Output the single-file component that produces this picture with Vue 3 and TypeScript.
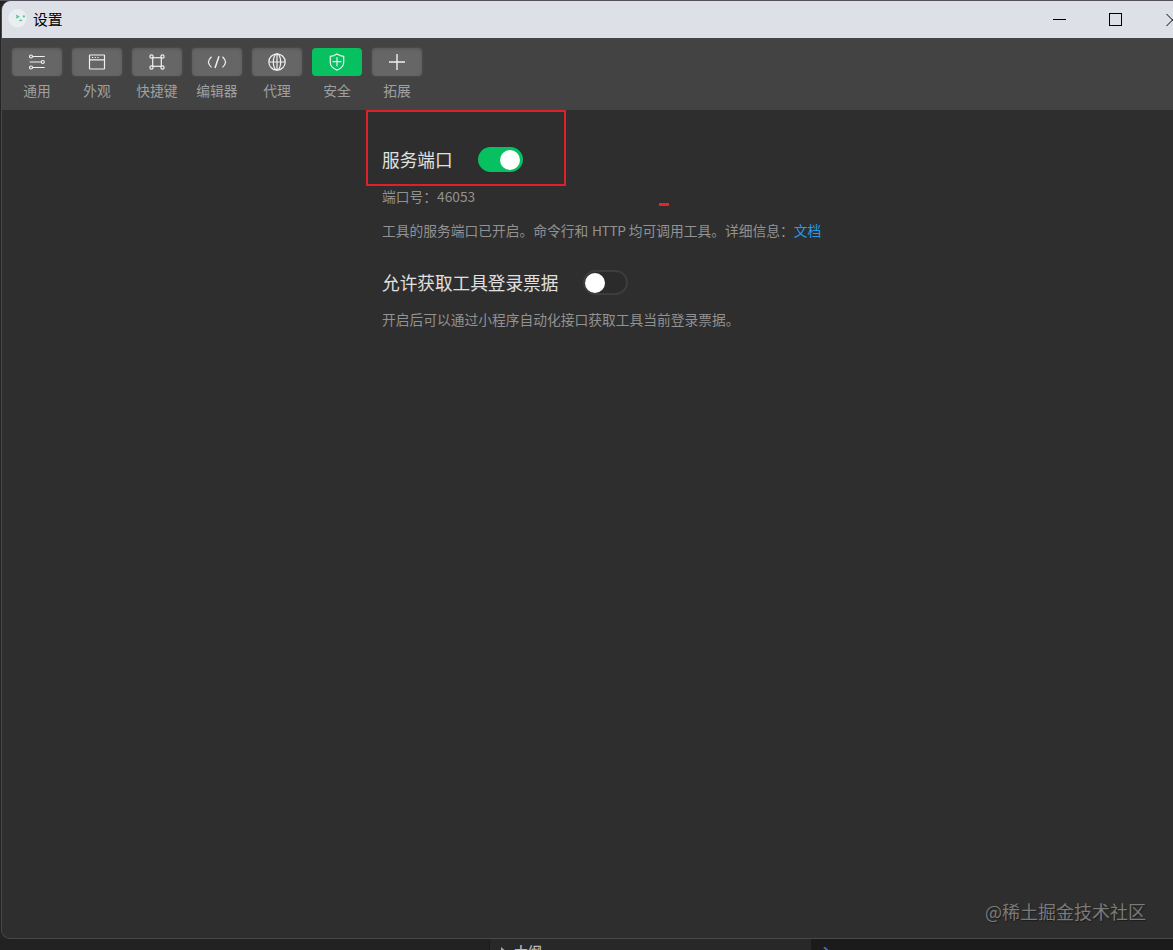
<script setup lang="ts">
import { ref } from 'vue'

type IconName = 'general' | 'appearance' | 'shortcut' | 'editor' | 'proxy' | 'security' | 'extension'

interface Tab {
  icon: IconName
  label: string
}

const tabs: Tab[] = [
  { icon: 'general', label: '通用' },
  { icon: 'appearance', label: '外观' },
  { icon: 'shortcut', label: '快捷键' },
  { icon: 'editor', label: '编辑器' },
  { icon: 'proxy', label: '代理' },
  { icon: 'security', label: '安全' },
  { icon: 'extension', label: '拓展' },
]

const active = ref<IconName>('security')
const portEnabled = ref(true)
const ticketEnabled = ref(false)
const port = 46053
</script>

<template>
  <div class="desktop">
    <div class="window">
      <header class="titlebar">
        <svg class="app-logo" width="20" height="20" viewBox="0 0 20 20">
          <circle cx="9.5" cy="10.3" r="9.2" fill="#e9eef0" />
          <path d="M8.2 7.4l2.3 1.3-2.3 1.2" fill="none" stroke="#4fc59a" stroke-width="1.3" />
          <circle cx="15.9" cy="8.4" r="1.1" fill="#4fc59a" />
          <path d="M11.4 12q1.3 1 2.6 0" fill="none" stroke="#4fc59a" stroke-width="1.3" />
        </svg>
        <span class="title">设置</span>
        <div class="controls">
          <svg width="14" height="14" viewBox="0 0 14 14"><path d="M1 6.5h13" /></svg>
          <svg width="14" height="14" viewBox="0 0 14 14"><rect x="1.5" y="0.5" width="12" height="12" /></svg>
          <svg width="14" height="14" viewBox="0 0 14 14"><path d="M2.5 1l12 12M14.5 1l-12 12" /></svg>
        </div>
      </header>

      <nav class="toolbar">
        <div
          v-for="tab in tabs"
          :key="tab.icon"
          class="tab"
          :class="{ active: tab.icon === active }"
          @click="active = tab.icon"
        >
          <button class="tab-button" type="button">
            <svg width="20" height="20" viewBox="0 0 20 20">
              <template v-if="tab.icon === 'general'">
                <circle cx="4" cy="4.5" r="1.5" />
                <circle cx="15.8" cy="10" r="1.5" />
                <circle cx="4" cy="15.5" r="1.5" />
                <path d="M5.5 4.5h12.2M2.7 10h11.6M5.5 15.5h12.2" />
              </template>
              <template v-else-if="tab.icon === 'appearance'">
                <rect x="2.5" y="3" width="15" height="14" rx="0.5" />
                <path d="M2.5 7.8h15" />
                <path d="M5 5.5h1.2M7.7 5.5h1.2M10.4 5.5h1.2" />
              </template>
              <template v-else-if="tab.icon === 'shortcut'">
                <rect x="5.7" y="5.7" width="8.6" height="8.6" />
                <circle cx="4.5" cy="4.5" r="1.6" />
                <circle cx="15.5" cy="4.5" r="1.6" />
                <circle cx="4.5" cy="15.5" r="1.6" />
                <circle cx="15.5" cy="15.5" r="1.6" />
              </template>
              <template v-else-if="tab.icon === 'editor'">
                <path d="M4.5 4.8Q1.9 7.3 1.4 10.1q.5 2.9 3.1 5.3M15.5 4.8q2.6 2.5 3.1 5.3-.5 2.9-3.1 5.3" />
                <path class="slash" d="M12 4.3L8 15.9" />
              </template>
              <template v-else-if="tab.icon === 'proxy'">
                <circle cx="10" cy="10" r="8.2" />
                <ellipse cx="10" cy="10" rx="3.7" ry="8.2" />
                <path d="M1.8 10h16.4M10 1.8v16.4" />
              </template>
              <template v-else-if="tab.icon === 'security'">
                <path d="M10 2Q6.8 4.2 3.3 4.3v6.2c0 3.7 3 6.1 6.7 7.6 3.7-1.5 6.7-3.9 6.7-7.6V4.3Q13.2 4.2 10 2z" />
                <path d="M5.5 9.7h9M10 5.2v9" />
              </template>
              <template v-else>
                <path class="plus" d="M2 10h16M10 2v16" />
              </template>
            </svg>
          </button>
          <span class="tab-label">{{ tab.label }}</span>
        </div>
      </nav>

      <main class="content">
        <section class="setting">
          <div class="setting-head">
            <h2>服务端口</h2>
            <button
              class="switch"
              :class="{ on: portEnabled }"
              type="button"
              @click="portEnabled = !portEnabled"
            ></button>
          </div>
          <p class="port">端口号：{{ port }}</p>
          <p class="detail">
            工具的服务端口已开启。命令行和 <span class="latin">HTTP</span> 均可调用工具。详细信息：<a>文档</a>
          </p>
        </section>
        <section class="setting second">
          <div class="setting-head">
            <h2>允许获取工具登录票据</h2>
            <button
              class="switch"
              :class="{ on: ticketEnabled }"
              type="button"
              @click="ticketEnabled = !ticketEnabled"
            ></button>
          </div>
          <p class="ticket">开启后可以通过小程序自动化接口获取工具当前登录票据。</p>
        </section>
      </main>
    </div>

    <footer class="behind">
      <div class="behind-left"></div>
      <div class="behind-outline">
        <svg width="8" height="10" viewBox="0 0 8 10"><path d="M1 0l6 5-6 5z" fill="#aaa" /></svg>
        <span>大纲</span>
      </div>
      <div class="behind-right">
        <svg width="6" height="8" viewBox="0 0 6 8"><path d="M1 0l4 4-4 4" fill="none" stroke="#4467b5" stroke-width="2" /></svg>
      </div>
    </footer>

    <div class="highlight"></div>
    <div class="red-mark"></div>
    <div class="watermark">@稀土掘金技术社区</div>
  </div>
</template>

<style>
body {
  background: #212121;
}
</style>

<style scoped>
.desktop {
  position: relative;
  width: 100%;
  height: 950px;
  overflow: hidden;
  display: flex;
  flex-direction: column;
  background: #242424;
  border-top: 1px solid #53505c;
  box-sizing: border-box;
  font-family: 'Noto Sans CJK SC', sans-serif;
}

.window {
  flex: none;
  height: 938px;
  width: 1190px;
  margin-left: 1px;
  box-sizing: border-box;
  border: 1px solid #484848;
  border-top: 0;
  border-radius: 9px;
  overflow: hidden;
  background: #2e2e2e;
}

.titlebar {
  display: flex;
  align-items: center;
  height: 37px;
  padding-left: 6px;
  background: #dee0e8;
  color: #000;
}

.app-logo {
  margin-top: -3px;
}

.title {
  margin: -2px 0 0 5px;
  font-size: 14.8px;
  line-height: 20px;
}

.controls {
  display: flex;
  gap: 42px;
  margin-left: auto;
  margin-right: 12px;
}

.controls svg {
  fill: none;
  stroke: #000;
  stroke-width: 1;
  overflow: visible;
}

.toolbar {
  display: flex;
  height: 72px;
  box-sizing: border-box;
  padding: 10px 0 0 5px;
  background: #424342;
}

.tab {
  display: flex;
  flex-direction: column;
  align-items: center;
  width: 60px;
}

.tab-button {
  display: flex;
  align-items: center;
  justify-content: center;
  width: 50px;
  height: 28px;
  padding: 0;
  border: 0;
  border-radius: 4px;
  background: #666;
  box-shadow: 0 0 3px #555, inset 0 1px 3px #555;
}

.tab-button svg {
  fill: none;
  stroke: #f0f0f0;
  stroke-width: 1.2;
}

.tab-button .slash {
  stroke-width: 1.5;
}

.tab-button .plus {
  stroke-width: 1.4;
}

.active .tab-button {
  background: #07c160;
  box-shadow: none;
}

.tab-label {
  margin-top: 4px;
  color: #a0a0a0;
  font-size: 13.75px;
  line-height: 20px;
  white-space: nowrap;
}

.content {
  padding: 36px 0 0 380px;
}

.setting-head {
  display: flex;
  align-items: center;
  height: 27px;
  gap: 25.4px;
}

h2 {
  margin: 0;
  color: #e0e0e0;
  font-size: 17.65px;
  font-weight: 400;
  line-height: 27px;
}

p {
  margin: 0;
  color: #929292;
  font-size: 13.76px;
  line-height: 20px;
  white-space: nowrap;
}

.port {
  margin-top: 13px;
}

.detail {
  margin-top: 14px;
}

.latin {
  margin-left: 0.6px;
  letter-spacing: -0.35px;
}

a {
  color: #259cea;
}

.second {
  margin-top: 29px;
}

.ticket {
  margin-top: 13px;
}

.switch {
  width: 45px;
  height: 25px;
  padding: 0 1px;
  border: 2px solid #3d3d3d;
  border-radius: 13px;
  background: #2b2b2b;
  box-sizing: border-box;
  display: flex;
  align-items: center;
}

.second .switch {
  margin-left: -1px;
}

.switch::before {
  content: '';
  width: 20px;
  height: 20px;
  margin-left: -1px;
  border-radius: 50%;
  background: #fff;
}

.switch.on {
  justify-content: flex-end;
  border-color: #07c160;
  background: #07c160;
}

.behind {
  display: flex;
  flex: none;
  height: 20px;
}

.behind-left {
  width: 489px;
  background: #222;
  border-right: 1px solid #1b1b1b;
}

.behind-outline {
  display: flex;
  align-items: flex-start;
  gap: 6px;
  width: 321px;
  padding: 3px 0 0 10px;
  box-sizing: border-box;
  background: #282828;
  color: #b8b8b8;
  font-size: 13.9px;
  font-weight: 500;
  line-height: 20px;
}

.behind-outline span {
  margin-top: -1px;
}

.behind-outline svg {
  margin-top: 5px;
}

.behind-right {
  flex: 1;
  padding: 8px 0 0 12px;
  background: #1b1b1b;
}

.behind-right svg {
  display: block;
}

.highlight {
  position: absolute;
  left: 366px;
  top: 109px;
  width: 200px;
  height: 76px;
  box-sizing: border-box;
  border: 2px solid #df202b;
}

.red-mark {
  position: absolute;
  left: 659px;
  top: 202px;
  width: 10px;
  height: 3px;
  background: #e5242c;
}

.watermark {
  position: absolute;
  left: 985px;
  top: 897px;
  color: #7a7a7a;
  font-size: 18px;
  line-height: 26px;
  white-space: nowrap;
  text-shadow: 1px 1px 1px #1c1c1c;
}
</style>
